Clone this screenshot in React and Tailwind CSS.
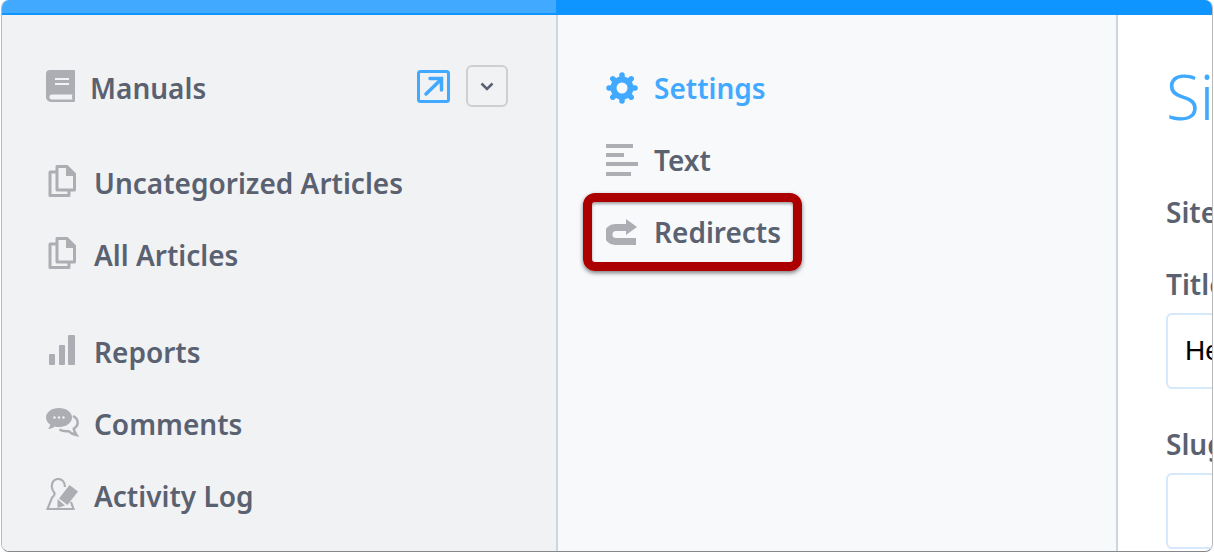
import React from 'react';

const font = "font-['Noto_Sans',sans-serif]";
const labelCls = 'text-[28px] leading-none font-semibold text-[#5a6170] whitespace-nowrap';

function BookIcon() {
  return (
    <svg width="29" height="32" viewBox="0 0 29 32" className="shrink-0">
      <path fillRule="evenodd" fill="#acaeb3" d="M4 0h24a1 1 0 0 1 1 1v29.500a1.500 1.500 0 0 1-1.500 1.500H5a5 5 0 0 1-5-5V4a4 4 0 0 1 4-4zM9 8v2h14V8zM9 13v2h14v-2zM6 24.500a2.500 2.500 0 0 0 0 5h20.500c-.6-1.500-.6-3.500 0-5z" />
    </svg>
  );
}

function ExternalIcon() {
  return (
    <svg width="33" height="33" viewBox="0 0 33 33" className="shrink-0">
      <rect x="1.500" y="1.500" width="30" height="30" rx="2" fill="none" stroke="#41a9ff" strokeWidth="3" />
      <path d="M9 24 24 9.500M13 8.500h11.500V20" fill="none" stroke="#41a9ff" strokeWidth="3.500" strokeLinecap="round" />
    </svg>
  );
}

function PagesIcon() {
  return (
    <svg width="28" height="32" viewBox="0 0 28 32" className="shrink-0">
      <path fill="none" stroke="#acaeb3" strokeWidth="3" strokeLinejoin="round" d="M9 7H2v23.500h19V25" />
      <path fill="none" stroke="#acaeb3" strokeWidth="3" strokeLinejoin="round" d="M9 1.500h10l7.500 7.500v16H9z" />
      <path fill="#acaeb3" d="M18 1h2l8 8v2H18z" />
    </svg>
  );
}

function BarsIcon() {
  return (
    <svg width="26" height="30" viewBox="0 0 26 30" className="shrink-0">
      <rect x="0" y="19" width="6" height="11" rx="1" fill="#acaeb3" />
      <rect x="10" y="10" width="6" height="20" rx="1" fill="#acaeb3" />
      <rect x="19" y="0" width="7" height="30" rx="1" fill="#acaeb3" />
    </svg>
  );
}

function CommentsIcon() {
  return (
    <svg width="33" height="29" viewBox="0 0 33 29" className="shrink-0">
      <path fill="none" stroke="#acaeb3" strokeWidth="2.500" d="M27 8c2.800 1.500 4.700 3.800 4.700 6.500 0 2.600-1.600 4.800-4 6.300.4 2 1.200 4 2.800 6.200-3.400-.6-6-1.800-8-3.800-3.200.4-6.500-.1-9-1.700" />
      <path fill="#acaeb3" d="M13 0C5.800 0 0 4.200 0 9.500c0 2.900 1.700 5.400 4.300 7.100-.4 1.700-1.200 3.300-2.300 4.500 2.600-.3 5-1.200 6.900-2.700 1.300.4 2.700.6 4.100.6 7.200 0 13-4.200 13-9.500S20.200 0 13 0z" />
      <circle cx="8.500" cy="9.500" r="1.200" fill="#f1f2f4" />
      <circle cx="13" cy="9.500" r="1.200" fill="#f1f2f4" />
      <circle cx="17.500" cy="9.500" r="1.200" fill="#f1f2f4" />
    </svg>
  );
}

function ActivityIcon() {
  return (
    <svg width="33" height="33" viewBox="0 0 33 33" className="shrink-0">
      <path fill="none" stroke="#acaeb3" strokeWidth="2.200" d="M19 9c-.2-4.500-2.800-8-7-8S5.500 4.500 5.800 9c.2 2.500 1.400 4.500 2.700 6 .4 2-.6 3.400-2.500 4.700L1.500 31h26L25 24" />
      <path fill="#acaeb3" d="M23.500 7 32 13.500 21.500 27 13 20.500z" />
      <path fill="#acaeb3" d="M11.500 21 19 27.500l-7.500 2.500z" />
    </svg>
  );
}

function GearIcon() {
  return (
    <svg width="32" height="32" viewBox="0 0 32 32" className="shrink-0">
      <circle cx="16" cy="16" r="8.500" fill="none" stroke="#41a9ff" strokeWidth="6" />
      <g stroke="#41a9ff" strokeWidth="5.500" strokeLinecap="round">
        <path d="M16 3v3M16 26v3M3 16h3M26 16h3M6.800 6.800l2 2M23.200 23.200l2 2M6.800 25.200l2-2M23.200 8.800l2-2" />
      </g>
    </svg>
  );
}

function LinesIcon() {
  return (
    <svg width="32" height="32" viewBox="0 0 32 32" className="shrink-0">
      <rect x="0" y="0" width="27" height="4" fill="#acaeb3" />
      <rect x="0" y="9" width="18" height="4" fill="#acaeb3" />
      <rect x="0" y="18" width="32" height="4" fill="#acaeb3" />
      <rect x="0" y="28" width="25" height="4" fill="#acaeb3" />
    </svg>
  );
}

function RedirectIcon() {
  return (
    <svg width="31" height="26" viewBox="0 0 31 26" className="shrink-0">
      <path fill="#acaeb3" d="M20 0l11 8-11 8v-4H10a2.500 2.500 0 0 0 0 7h20v7H9A9 9 0 0 1 9 5h11z" />
    </svg>
  );
}

const NavRow = ({ icon, label, iconBox = 'w-[46px]', iconShift = '', labelMt = 'mt-[4px]' }) => (
  <div className="flex h-[72px] items-center">
    <div className={`flex ${iconBox} shrink-0 items-center ${iconShift}`}>{icon}</div>
    <span className={`${labelMt} ${labelCls}`}>{label}</span>
  </div>
);

export default function App() {
  return (
    <div className={`h-[554px] w-[1214px] overflow-hidden bg-white pl-[1px] ${font}`}>
      <div className="h-[552px] w-[1212px] overflow-hidden rounded-[8px] border border-t-0 border-[#b9babd] border-b-[#85878a] bg-white">
        <div className="flex h-[15px] border-b-2 border-[#0f95ff]">
          <div className="w-[554px] bg-[#41a9ff]" />
          <div className="flex-1 bg-[#0f95ff]" />
        </div>
        <div className="flex h-[536px]">
          <aside className="w-[556px] shrink-0 border-r-2 border-[#cdd5df] bg-[#f1f2f4] pl-[44px] pr-[48px]">
            <div className="mt-[49px] flex h-[44px] items-center justify-between">
              <div className="flex items-center gap-[15px]">
                <BookIcon />
                <span className={`mt-[4px] ${labelCls}`}>Manuals</span>
              </div>
              <div className="flex items-center gap-[16px]">
                <ExternalIcon />
                <div className="flex h-[42px] w-[42px] items-center justify-center rounded-[6px] border-2 border-[#cfcfd1]">
                  <svg width="14" height="9" viewBox="0 0 14 9">
                    <path d="M1.500 1.500 7 7 12.500 1.500" fill="none" stroke="#5a6170" strokeWidth="2.500" />
                  </svg>
                </div>
              </div>
            </div>
            <div className="mt-[37px] pl-[2px]">
              <NavRow icon={<PagesIcon />} label="Uncategorized Articles" />
              <NavRow icon={<PagesIcon />} label="All Articles" />
            </div>
            <div className="mt-[25px] pl-[2px]">
              <NavRow icon={<BarsIcon />} label="Reports" iconShift="pl-[1px]" />
              <NavRow icon={<CommentsIcon />} label="Comments" iconShift="-ml-[2px] w-[48px]" />
              <NavRow icon={<ActivityIcon />} label="Activity Log" iconShift="-ml-[2px] w-[48px]" />
            </div>
          </aside>
          <nav className="w-[560px] shrink-0 border-r-2 border-[#cdd5df] bg-[#f8f9fb] pl-[48px] pt-[37px]">
            <div className="flex h-[72px] items-center">
              <div className="w-[48px] shrink-0"><GearIcon /></div>
              <span className={`-mt-[1px] ${labelCls} text-[#41a9ff]`}>Settings</span>
            </div>
            <NavRow icon={<LinesIcon />} label="Text" iconBox="w-[48px]" labelMt="-mt-[1px]" />
            <div className="relative">
              <NavRow icon={<RedirectIcon />} label="Redirects" iconBox="w-[48px]" labelMt="-mt-[1px]" />
              <div className="absolute -top-[3px] -left-[23px] h-[78px] w-[219px] rounded-[12px] border-[9px] border-[#ac0000] shadow-[0_2px_4px_rgba(0,0,0,0.5),inset_0_2px_3px_rgba(0,0,0,0.35)]" />
            </div>
          </nav>
          <main className="min-w-0 flex-1 overflow-hidden pl-[48px]">
            <div className="mt-[50px] text-[62px] leading-none font-light text-[#41a9ff] whitespace-nowrap">Site Settings</div>
            <div className={`mt-[71px] ${labelCls}`}>Site Details</div>
            <div className={`mt-[44px] ${labelCls}`}>Title</div>
            <div className="mt-[15px] flex h-[76px] w-[500px] items-center rounded-[6px] border-2 border-[#d5e9fb] pl-[17px] text-[28px] text-black font-['Liberation_Sans',sans-serif]">Help</div>
            <div className={`mt-[41px] ${labelCls}`}>Slug</div>
            <div className="mt-[15px] h-[76px] w-[500px] rounded-[6px] border-2 border-[#d5e9fb]" />
          </main>
        </div>
      </div>
    </div>
  );
}
